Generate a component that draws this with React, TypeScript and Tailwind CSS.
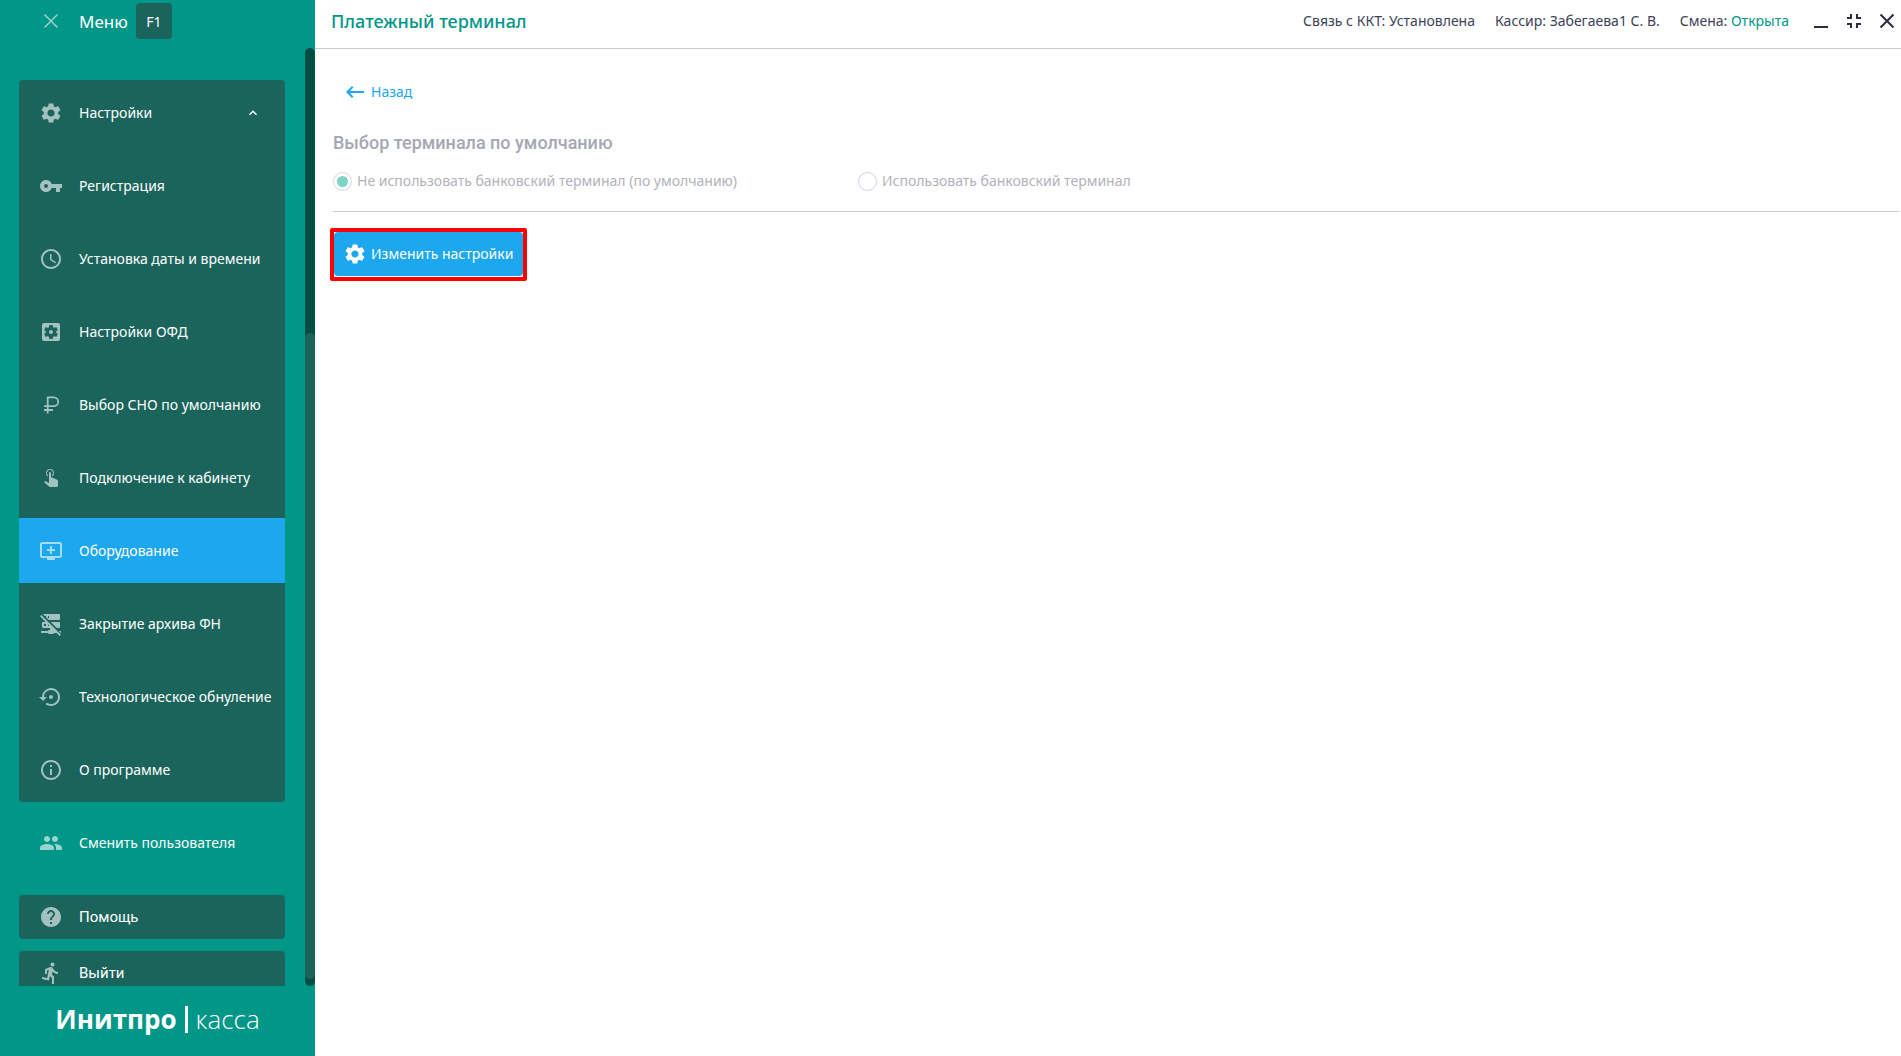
import type { ComponentType, ReactNode } from "react";
import {
    MdAccessTime,
    MdAddToQueue,
    MdDirectionsRun,
    MdFullscreenExit,
    MdHelp,
    MdInfoOutline,
    MdKeyboardArrowUp,
    MdKeyboardBackspace,
    MdPeople,
    MdSettings,
    MdSettingsApplications,
    MdSettingsBackupRestore,
    MdVpnKey,
} from "react-icons/md";

function App() {
    return (
        <div className="flex h-screen bg-white font-['Noto_Sans','Open_Sans',sans-serif] text-sm text-[#3c3f58]">
            <Sidebar />
            <div className="flex min-w-0 flex-1 flex-col">
                <Header />
                <TerminalSettings />
            </div>
        </div>
    )
}

export default App;

function Sidebar() {
    return (
        <aside className="flex w-[315px] shrink-0 flex-col bg-[#009688] text-white">
            <div className="flex h-12 shrink-0 items-start pt-[3px] pl-[39px]">
                <button className="flex h-9 w-6 items-center justify-center text-white/60" aria-label="Закрыть меню">
                    <CrossIcon className="size-6" />
                </button>
                <span className="ml-4 text-[17px] leading-[38px]">Меню</span>
                <kbd className="ml-2 h-9 w-9 rounded bg-[#1a645c] text-center font-['Noto_Sans','Open_Sans',sans-serif] text-sm leading-[38px]">F1</kbd>
            </div>

            <div className="flex min-h-0 flex-1">
                <nav className="min-w-0 flex-1 overflow-hidden pt-8 pr-5 pl-[19px]">
                    <div className="flex flex-col gap-2 rounded bg-[#1a645c]">
                        {settings.map((item) => <MenuItem key={item.label} {...item} />)}
                    </div>
                    <div className="mt-2">
                        <MenuItem icon={MdPeople} label="Сменить пользователя" />
                    </div>
                    <div className="mt-5 flex flex-col gap-3 font-[Roboto,sans-serif] text-[15px]">
                        <FooterItem icon={MdHelp} label="Помощь" />
                        <FooterItem icon={MdDirectionsRun} label="Выйти" />
                    </div>
                </nav>
                <div className="flex w-[10px] shrink-0 flex-col rounded-full bg-[#004d44] pb-[7px]">
                    <div className="flex-[285]" />
                    <div className="flex-[646] rounded-full bg-[#1a645c]" />
                </div>
            </div>

            <div className="flex h-[70px] shrink-0 items-center justify-center gap-2 pb-1 font-['Open_Sans','Noto_Sans',sans-serif] text-[26px] leading-8">
                <span className="font-bold">Инитпро</span>
                <span className="h-[27px] w-[3px] bg-white" />
                <span className="font-light">касса</span>
            </div>
        </aside>
    )
}

function MenuItem({icon: Icon, label, active, open}:MenuItemProps) {
    return (
        <button className={`flex h-[65px] w-full items-center pl-5 text-left whitespace-nowrap ${active ? "bg-[#1ca7ef]" : ""}`}>
            <Icon className="size-6 shrink-0 text-white/60" />
            <span className="ml-4">{label}</span>
            {open && <MdKeyboardArrowUp className="mr-6 ml-auto size-4" />}
        </button>
    )
}

function FooterItem({icon: Icon, label}:MenuItemProps) {
    return (
        <button className="flex h-11 w-full shrink-0 items-center rounded bg-[#1a645c] pl-5 text-left">
            <Icon className="size-6 shrink-0 text-white/60" />
            <span className="mt-px ml-4">{label}</span>
        </button>
    )
}

function Header() {
    return (
        <header className="flex h-[49px] shrink-0 items-center border-b border-[#c8cdcc] pr-[2px] pb-[6px] pl-4">
            <h1 className="text-lg font-medium text-[#009688]">Платежный терминал</h1>
            <div className="ml-auto flex items-center gap-5">
                <span>Связь с ККТ: Установлена</span>
                <span>Кассир: Забегаева1 С. В.</span>
                <span>Смена: <span className="text-[#009688]">Открыта</span></span>
            </div>
            <div className="ml-5 flex items-center gap-[9px] text-[#2b2d42]">
                <button aria-label="Свернуть">
                    <svg viewBox="0 0 24 24" className="size-6"><path d="M5 17h14v2H5z" fill="currentColor" /></svg>
                </button>
                <button aria-label="Оконный режим"><MdFullscreenExit className="size-6" /></button>
                <button aria-label="Закрыть"><CrossIcon className="size-6" strokeWidth={2} /></button>
            </div>
        </header>
    )
}

function TerminalSettings() {
    return (
        <main className="flex flex-col pt-[31px] pr-[2px] pl-[18px]">
            <a href="#" className="flex items-center gap-1 self-start pl-[10px] leading-5 text-[#1ca7ef]">
                <MdKeyboardBackspace className="size-6" />
                Назад
            </a>

            <h2 className="mt-[25px] font-[Roboto,sans-serif] text-lg leading-7 font-medium text-[#a5a7b3]">Выбор терминала по умолчанию</h2>

            <div className="mt-[14px] flex border-b border-[#c8cdcc] pb-5">
                <Radio checked>Не использовать банковский терминал (по умолчанию)</Radio>
                <Radio>Использовать банковский терминал</Radio>
            </div>

            <div className="mt-4 -ml-[3px] self-start rounded-xs border-4 border-[#ff0000] pb-px">
                <button className="flex h-11 items-center gap-1 rounded bg-[#1ca7ef] pr-[10px] pl-[9px] text-white">
                    <MdSettings className="size-6" />
                    Изменить настройки
                </button>
            </div>
        </main>
    )
}

function Radio({checked, children}:RadioProps) {
    return (
        <label className="flex w-[525px] items-center gap-[5px] text-[#b0b2bc]">
            <input
                type="radio"
                name="terminal"
                defaultChecked={checked}
                disabled
                className="size-[19px] shrink-0 appearance-none rounded-full border border-[#ccd3e4] bg-white bg-clip-content p-[3px] checked:border-[#d4d6d8] checked:bg-[#80d3c8]"
            />
            {children}
        </label>
    )
}

function CrossIcon({className, strokeWidth = 1.5}:CrossIconProps) {
    return (
        <svg viewBox="0 0 24 24" className={className} fill="none" stroke="currentColor" strokeWidth={strokeWidth}>
            <path d="M5.5 5.5l13 13M18.5 5.5l-13 13" />
        </svg>
    )
}

function RubleIcon({className}:IconProps) {
    return (
        <svg viewBox="0 0 24 24" className={className} fill="none" stroke="currentColor" strokeWidth="1.8">
            <path d="M8.7 20.5V4.4h6.1a4.4 4.4 0 0 1 0 8.8H5M5 17h9" />
        </svg>
    )
}

function TapIcon({className}:IconProps) {
    return (
        <svg viewBox="0 2 24 24" className={className} fill="currentColor">
            <path d="M10 9a1 1 0 0 1 2 0v4.470l1.210.13 4.940 2.190c.53.24.85.77.85 1.350v4.360c-.03.82-.68 1.470-1.500 1.500H11c-.38 0-.74-.15-1-.43l-4.900-4.200.74-.77c.19-.21.46-.32.74-.32h.22L10 19zM11 5a4 4 0 0 1 2 7.460v-1.220A3 3 0 1 0 9 11.240v1.220A4 4 0 0 1 11 5z" />
        </svg>
    )
}

function ServerOffIcon({className}:IconProps) {
    return (
        <svg viewBox="0 0 24 24" className={className} fill="currentColor">
            <path d="M4 2h16a1 1 0 0 1 1 1v4a1 1 0 0 1-1 1H9.8L7 5.2V4H5.8L3.9 2zM9 4v2h1V4zM11.8 10H20a1 1 0 0 1 1 1v4a1 1 0 0 1-1 1h-2.200zM1 4.300L2.300 3 22 22.700 20.700 24l-3-3H15a1 1 0 0 1-1 1h-4a1 1 0 0 1-1-1H2v-2h7a1 1 0 0 1 1-1h1v-2H4a1 1 0 0 1-1-1v-4a1 1 0 0 1 1-1h2.700zM9 12.300V14h1v-.7zM5 12v2h2v-2zM19.800 19H22v2h-.2z" />
        </svg>
    )
}

const settings: MenuItemProps[] = [
    { icon: MdSettings, label: "Настройки", open: true },
    { icon: MdVpnKey, label: "Регистрация" },
    { icon: MdAccessTime, label: "Установка даты и времени" },
    { icon: MdSettingsApplications, label: "Настройки ОФД" },
    { icon: RubleIcon, label: "Выбор СНО по умолчанию" },
    { icon: TapIcon, label: "Подключение к кабинету" },
    { icon: MdAddToQueue, label: "Оборудование", active: true },
    { icon: ServerOffIcon, label: "Закрытие архива ФН" },
    { icon: MdSettingsBackupRestore, label: "Технологическое обнуление" },
    { icon: MdInfoOutline, label: "О программе" },
];

interface IconProps {
    className?: string;
}

interface CrossIconProps extends IconProps {
    strokeWidth?: number;
}

interface MenuItemProps {
    icon: ComponentType<IconProps>;
    label: string;
    active?: boolean;
    open?: boolean;
}

interface RadioProps {
    checked?: boolean;
    children: ReactNode;
}
